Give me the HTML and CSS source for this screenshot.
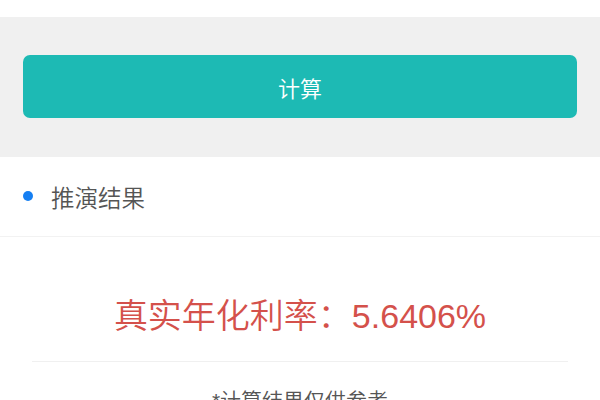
FILE: index.html
```html
<!DOCTYPE html>
<html lang="zh">
<head>
<meta charset="utf-8">
<link rel="stylesheet" href="styles.css">
</head>
<body>
<div class="top"></div>
<section class="action">
  <button class="calc">计算</button>
</section>
<section class="result">
  <div class="result-head">
    <span class="dot"></span>
    <span class="head-text">推演结果</span>
  </div>
  <div class="rate">真实年化利率：5.6406%</div>
  <div class="note">*计算结果仅供参考</div>
</section>
</body>
</html>
```

FILE: styles.css
```css
* { box-sizing: border-box; }
html, body { margin: 0; padding: 0; }
body {
  width: 600px;
  height: 400px;
  overflow: hidden;
  background: #ffffff;
  font-family: "Liberation Sans", "Noto Sans CJK SC", sans-serif;
  font-weight: 350;
}
.top { height: 17px; background: #ffffff; }
.action {
  background: #f0f0f0;
  height: 140px;
  padding: 38px 23px 0 23px;
}
.calc {
  display: block;
  width: 100%;
  height: 63px;
  border: none;
  border-radius: 7px;
  background: #1dbab4;
  color: #ffffff;
  font-family: inherit;
  font-weight: 350;
  font-size: 22px;
  padding: 0;
}
.result { background: #ffffff; }
.result-head {
  height: 80px;
  display: flex;
  align-items: center;
  padding-left: 23px;
  border-bottom: 1px solid #f2f2f2;
}
.dot {
  width: 10px;
  height: 10px;
  border-radius: 50%;
  background: #157ff2;
  margin-right: 18px;
  margin-top: -1px;
}
.head-text {
  font-size: 23.5px;
  color: #555555;
}
.rate {
  margin: 0 32px;
  height: 125px;
  display: flex;
  align-items: center;
  justify-content: center;
  padding-top: 28px;
  font-size: 34px;
  color: #d4514b;
  border-bottom: 1px solid #f0f0f0;
}
.note {
  text-align: center;
  font-size: 21px;
  color: #555555;
  padding-top: 22px;
}
```
